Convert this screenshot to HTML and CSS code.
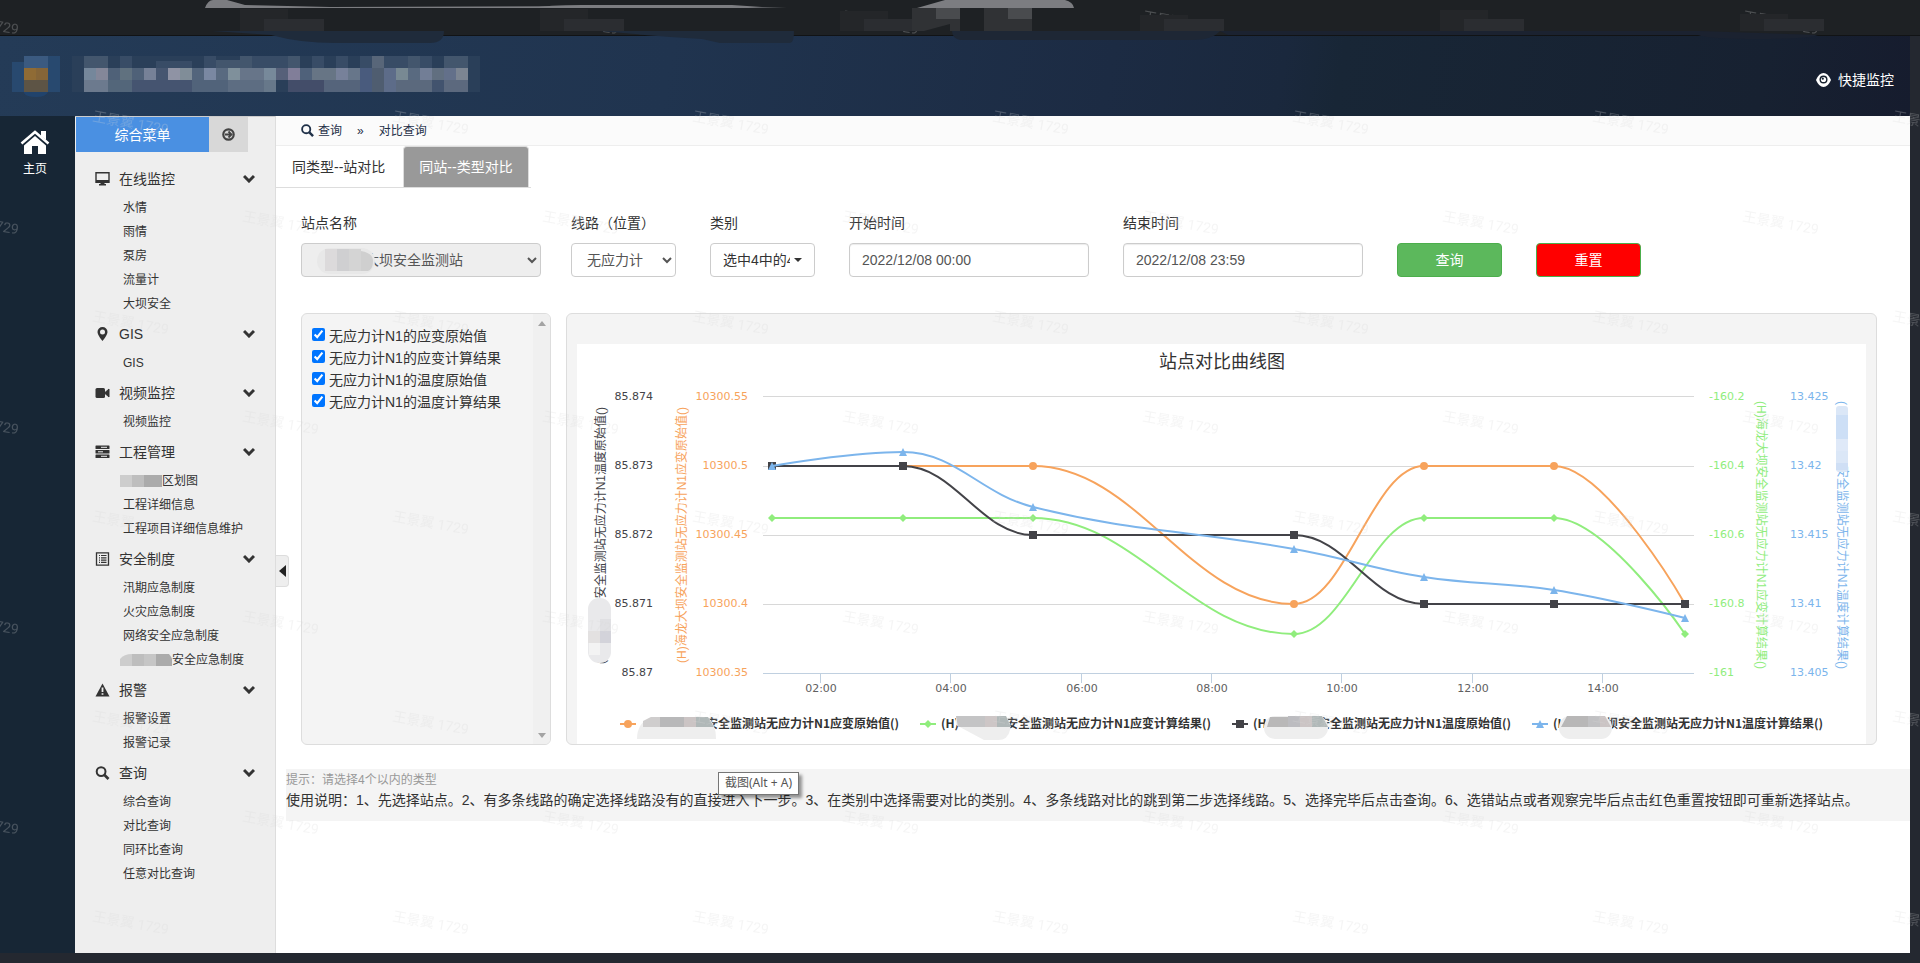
FILE: index.html
```html
<!DOCTYPE html>
<html lang="zh-CN">
<head>
<meta charset="utf-8">
<title>对比查询</title>
<link rel="stylesheet" href="styles.css">
</head>
<body>
<svg class="sprite" aria-hidden="true">
  <symbol id="i-chevron" viewBox="0 0 12 9"><path d="M1 2l5 5 5-5" fill="none" stroke="currentColor" stroke-width="3"/></symbol>
  <symbol id="i-search" viewBox="0 0 14 14"><circle cx="5.6" cy="5.6" r="4.4" fill="none" stroke="currentColor" stroke-width="2"/><path d="M9 9l4 4" stroke="currentColor" stroke-width="2.6"/></symbol>
</svg>

<div class="strip">
  <svg class="strip-art" width="1920" height="48" viewBox="0 0 1920 48" aria-hidden="true">
    <path d="M205 8q3-8 8-8h14l18 5 85 2 300-1 60-1 20 1 77 2z" fill="#7c7d81"/>
    <path d="M532 8q15-3 50-3h150l30 2-100 1z" fill="#7c7d81"/>
    <path d="M917 8l28-8h120q8 2 9 8z" fill="#7c7d81"/>
    <g fill="#242629"><path d="M240 9h48v22h-48zM540 9h48v22h-48zM840 11h48v20h-48zM1140 15h48v16h-48zM1440 10h48v21h-48zM1740 14h48v17h-48z"/></g>
    <g fill="#1e2124"><path d="M288 9h42v10h-42zM588 9h42v10h-42zM888 9h24v10h-24zM1188 16h42v6h-42zM1488 9h42v10h-42zM1788 14h42v8h-42z"/></g>
    <g fill="#2b2d31"><path d="M264 19h60v12h-60zM564 19h60v12h-60zM864 19h48v12h-48zM1164 19h60v12h-60zM1464 19h60v12h-60zM1764 19h60v12h-60z"/></g>
    <path d="M912 8h48v23h-48zM984 8h48v23h-48z" fill="#303235"/>
    <path d="M936 8h24v11h-24zM1008 8h24v11h-24z" fill="#494b4e"/>
    <path d="M924 31l26-7v7z" fill="#1e2124"/>
    <path d="M212 31h232q0 12-14 12h-95q-35 0-64-8z" fill="#1f2b3b"/>
    <path d="M600 31h194q0 12-4 12h-70l-18-4q-50-3-102-8z" fill="#1f2b3b"/>
    <path d="M952 31h268q-8 9-28 9H960q-8-2-8-9z" fill="#1e2735"/>
    <path d="M1220 31h480l118 4q-10 4-60 4t-60-4h-470z" fill="#1b2230"/>
  </svg>
</div>

<div class="frame">
  <header class="head">
    <svg class="brand" width="480" height="48" viewBox="0 0 480 48" role="img" aria-label="平台名称">
      <path d="M12 6h12V1h24v-1h12v36H12z" fill="#28496f"/>
      <path d="M24 0h24v12H24z" fill="#3b5a80"/><path d="M24 12h12v12H24z" fill="#8f6b35"/><path d="M36 12h12v12H36z" fill="#856538"/><path d="M24 24h24v12H24z" fill="#5d5445"/><path d="M24 36h24q-2 5-12 5t-12-4z" fill="#21436c"/>
      <path d="M72 0h408v36H72z" fill="#2a3f59"/>
      <g fill="#43566d"><path d="M84 0h24v12H84zM240 0h12v12h-12zM288 0h12v12h-12zM408 0h12v12h-12zM444 0h24v12h-24zM216 4h24v8h-24z"/></g>
      <g fill="#384c66"><path d="M120 0h12v12h-12zM156 5h36v7h-36zM204 0h12v12h-12zM264 0h24v12h-24zM312 0h12v12h-12zM336 0h12v12h-12zM360 0h12v12h-12zM384 0h24v12h-24zM420 0h12v12h-12zM252 0h12v12h-12z"/></g>
      <path d="M372 0h12v12h-12z" fill="#586679"/>
      <path d="M84 12h12v12H84z" fill="#75879b"/><path d="M96 12h12v12H96z" fill="#848799"/>
      <path d="M108 12h12v12h-12zM132 12h12v12h-12z" fill="#4f6178"/><path d="M120 12h12v12h-12z" fill="#60717f"/>
      <path d="M144 12h12v12h-12z" fill="#768197"/><path d="M156 12h12v12h-12z" fill="#465670"/>
      <path d="M168 12h12v12h-12z" fill="#8f93a4"/><path d="M180 12h12v12h-12z" fill="#808d98"/><path d="M192 12h12v12h-12z" fill="#53657c"/>
      <path d="M204 12h12v12h-12z" fill="#7a88a2"/><path d="M216 12h12v12h-12z" fill="#596a80"/><path d="M228 12h12v12h-12z" fill="#7f909b"/>
      <path d="M240 12h24v12h-24z" fill="#677589"/><path d="M264 12h12v12h-12z" fill="#77899a"/><path d="M276 12h12v12h-12z" fill="#566079"/>
      <path d="M288 12h12v12h-12z" fill="#817e99"/><path d="M300 12h12v12h-12z" fill="#4f617a"/><path d="M312 12h24v12h-24z" fill="#677585"/>
      <path d="M336 12h12v12h-12z" fill="#77819a"/><path d="M348 12h12v12h-12z" fill="#67768a"/><path d="M360 12h12v24h-12z" fill="#495b7d"/>
      <path d="M372 12h12v24h-12z" fill="#4f5d70"/><path d="M384 12h12v24h-12z" fill="#5d6c89"/><path d="M396 12h12v12h-12z" fill="#788993"/>
      <path d="M408 12h12v12h-12z" fill="#596a80"/><path d="M420 12h12v12h-12z" fill="#727e96"/><path d="M432 12h12v12h-12z" fill="#616f80"/>
      <path d="M444 12h12v12h-12z" fill="#63708a"/><path d="M456 12h12v12h-12z" fill="#7c8592"/>
      <path d="M84 24h24v12H84z" fill="#6c7a8e"/><path d="M108 24h24v12h-24z" fill="#53667a"/><path d="M132 24h60v12h-60z" fill="#455470"/>
      <path d="M192 24h36v12h-36z" fill="#51637a"/><path d="M228 24h36v12h-36z" fill="#5d6d82"/><path d="M264 24h12v12h-12z" fill="#67788a"/>
      <path d="M288 24h36v12h-36z" fill="#434d69"/><path d="M324 24h36v12h-36z" fill="#55647b"/><path d="M396 24h36v12h-36z" fill="#5b697d"/>
      <path d="M432 24h12v12h-12z" fill="#42536e"/><path d="M444 24h24v12h-24z" fill="#5c697e"/>
    </svg>
    <a class="quick" href="#">
      <svg width="15" height="14" viewBox="0 0 15 14" aria-hidden="true"><path d="M0 7Q3 0 7.500 0T15 7q-3 7-7.500 7T0 7z" fill="#fff"/><circle cx="7.500" cy="6.500" r="4" fill="#18222f"/><circle cx="7.500" cy="6.500" r="2.600" fill="#fff"/><circle cx="6.800" cy="5.700" r="1.100" fill="#18222f"/></svg>
      快捷监控
    </a>
  </header>

  <div class="body">
    <nav class="rail">
      <a class="rail-link" href="#">
        <svg width="30" height="25" viewBox="0 0 30 25" aria-hidden="true"><path d="M1.500 13.500L15 2l13.500 11.500" fill="none" stroke="#fff" stroke-width="2.600"/><path d="M21 1h5v9l-5-4zM15 6l11 9.500V24h-8v-8h-6v8H4v-8.500z" fill="#fff"/></svg>
        主页
      </a>
    </nav>

    <aside class="side">
      <div class="side-top">
        <button class="side-title" type="button">综合菜单</button>
        <button class="side-pin" type="button" aria-label="切换菜单"><svg width="13" height="13" viewBox="0 0 13 13"><circle cx="6.500" cy="6.500" r="5.200" fill="none" stroke="#444" stroke-width="2.200"/><path d="M3 6.500h6M6.500 3.500l3 3-3 3" fill="none" stroke="#444" stroke-width="1.800"/></svg></button>
      </div>
      <ul class="menu">
        <li>
          <a class="group" href="#"><svg class="gi" viewBox="0 0 15 14"><path d="M1 .8h13v9.400H1z" fill="none" stroke="#333" stroke-width="1.400"/><path d="M1 8h13v2.500H1zM5.500 10h4v2h1.500v1.500H4V12h1.500z" fill="#333"/></svg>在线监控<svg class="chev"><use href="#i-chevron"/></svg></a>
          <a class="item" href="#">水情</a><a class="item" href="#">雨情</a><a class="item" href="#">泵房</a><a class="item" href="#">流量计</a><a class="item" href="#">大坝安全</a>
        </li>
        <li>
          <a class="group" href="#"><svg class="gi" viewBox="0 0 15 14"><path d="M7.500 0a5 5 0 0 1 5 5c0 3-5 9-5 9s-5-6-5-9a5 5 0 0 1 5-5zm0 2.500a2.500 2.500 0 1 0 0 5 2.500 2.500 0 0 0 0-5z" fill="#333"/></svg>GIS<svg class="chev"><use href="#i-chevron"/></svg></a>
          <a class="item" href="#">GIS</a>
        </li>
        <li>
          <a class="group" href="#"><svg class="gi" viewBox="0 0 15 14"><rect x=".5" y="2" width="9.500" height="10" rx="1.500" fill="#333"/><path d="M10 6.500L14 3v8l-4-3.500z" fill="#333" stroke="#333"/></svg>视频监控<svg class="chev"><use href="#i-chevron"/></svg></a>
          <a class="item" href="#">视频监控</a>
        </li>
        <li>
          <a class="group" href="#"><svg class="gi" viewBox="0 0 15 14"><g fill="#333"><rect x=".5" y=".5" width="14" height="3.600" rx=".6"/><rect x=".5" y="5" width="14" height="3.600" rx=".6"/><rect x=".5" y="9.500" width="14" height="3.600" rx=".6"/></g><path d="M6 2.300h6M3 6.800h5M6 11.300h6" stroke="#eee"/></svg>工程管理<svg class="chev"><use href="#i-chevron"/></svg></a>
          <a class="item" href="#"><svg class="mask" width="42" height="12" viewBox="0 0 42 12"><path d="M0 0h12v12H0z" fill="#cdcdcd"/><path d="M12 0h12v12H12z" fill="#bebebe"/><path d="M24 0h18v12H24z" fill="#ababab"/></svg>区划图</a><a class="item" href="#">工程详细信息</a><a class="item" href="#">工程项目详细信息维护</a>
        </li>
        <li>
          <a class="group" href="#"><svg class="gi" viewBox="0 0 15 14"><path d="M1.500.8h12v12.400h-12z" fill="none" stroke="#333" stroke-width="1.300"/><path d="M4 3.500h1M4 5.800h1M4 8.100h1M4 10.400h1M6 3.500h5.500M6 5.800h5.500M6 8.100h5.500M6 10.400h5.500" stroke="#333" stroke-width="1.200"/></svg>安全制度<svg class="chev"><use href="#i-chevron"/></svg></a>
          <a class="item" href="#">汛期应急制度</a><a class="item" href="#">火灾应急制度</a><a class="item" href="#">网络安全应急制度</a>
          <a class="item" href="#"><svg class="mask" width="52" height="12" viewBox="0 0 52 12"><path d="M0 12V5q4-5 12-5v12z" fill="#cdcdcd"/><path d="M12 0h12v12H12z" fill="#bebebe"/><path d="M24 0h12v12H24z" fill="#c6c6c6"/><path d="M36 0h13q5 6 5 12H36z" fill="#ababab"/></svg>安全应急制度</a>
        </li>
        <li>
          <a class="group" href="#"><svg class="gi" viewBox="0 0 15 14"><path d="M7.500.5L14.500 13.500H.5z" fill="#333"/><path d="M7.500 4.500v4.500M7.500 10.300v1.500" stroke="#eee" stroke-width="1.800"/></svg>报警<svg class="chev"><use href="#i-chevron"/></svg></a>
          <a class="item" href="#">报警设置</a><a class="item" href="#">报警记录</a>
        </li>
        <li>
          <a class="group" href="#"><svg class="gi"><use href="#i-search"/></svg>查询<svg class="chev"><use href="#i-chevron"/></svg></a>
          <a class="item" href="#">综合查询</a><a class="item" href="#">对比查询</a><a class="item" href="#">同环比查询</a><a class="item" href="#">任意对比查询</a>
        </li>
      </ul>
    </aside>

    <main class="main">
      <button class="fold" type="button" aria-label="收起菜单"><svg width="7" height="12" viewBox="0 0 7 12"><path d="M7 0v12L0 6z" fill="#222"/></svg></button>
      <div class="crumb">
        <svg width="13" height="13"><use href="#i-search"/></svg><a href="#">查询</a><span class="sep">»</span><a href="#">对比查询</a>
      </div>
      <div class="tabs">
        <a class="tab" href="#">同类型--站对比</a>
        <a class="tab on" href="#">同站--类型对比</a>
      </div>

      <form class="filters">
        <div class="pair">
          <div class="field wide">
            <label for="station">站点名称</label>
            <select id="station" disabled><option>大坝安全监测站</option></select>
            <svg class="station-mask" width="58" height="26" viewBox="0 0 58 26" aria-hidden="true"><rect width="58" height="26" rx="13" fill="#e8e8e8"/><path d="M8 1h12v22H8z" fill="#dcdadb"/><path d="M20 1h12v22H20z" fill="#cfcfd1"/><path d="M32 1h12v22H32z" fill="#d4d4d4"/><path d="M44 3q12 2 12 10t-5 10h-7z" fill="#cfcfcf"/></svg>
          </div>
          <div class="field">
            <label for="line">线路（位置）</label>
            <select id="line"><option>无应力计</option></select>
          </div>
        </div>
        <div class="field">
          <label for="kind">类别</label>
          <button id="kind" class="drop" type="button"><span>选中4中的4个</span><i class="caret"></i></button>
        </div>
        <div class="field wide">
          <label for="from">开始时间</label>
          <input id="from" type="text" value="2022/12/08 00:00">
        </div>
        <div class="field wide">
          <label for="to">结束时间</label>
          <input id="to" type="text" value="2022/12/08 23:59">
        </div>
        <button class="btn" type="submit">查询</button>
        <button class="btn red" type="reset">重置</button>
      </form>

      <div class="panels">
        <div class="picks">
          <div class="checks">
            <label><input type="checkbox" checked>无应力计N1的应变原始值</label>
            <label><input type="checkbox" checked>无应力计N1的应变计算结果</label>
            <label><input type="checkbox" checked>无应力计N1的温度原始值</label>
            <label><input type="checkbox" checked>无应力计N1的温度计算结果</label>
          </div>
          <div class="bar"><svg width="8" height="5"><path d="M0 5l4-5 4 5z" fill="#a3a3a3"/></svg><svg width="8" height="5"><path d="M0 0l4 5 4-5z" fill="#a3a3a3"/></svg></div>
        </div>

        <div class="chart">
          <svg class="plot" viewBox="0 0 1289 400" role="img" aria-label="站点对比曲线图">
            <rect width="1289" height="400" fill="#fff"/>
            <text class="title" x="645" y="24">站点对比曲线图</text>
            <path d="M186 52.500h931M186 122.500h931M186 191.500h931M186 260.500h931" stroke="#d8d8d8"/>
            <path d="M186 329.500h931M243.500 329v10M373.500 329v10M504.500 329v10M634.500 329v10M764.500 329v10M895.500 329v10M1025.500 329v10" stroke="#c0d0e0"/>
            <g class="tick end dark"><text x="76" y="56">85.874</text><text x="76" y="125">85.873</text><text x="76" y="194">85.872</text><text x="76" y="263">85.871</text><text x="76" y="332">85.87</text></g>
            <g class="tick end orange"><text x="171" y="56">10300.55</text><text x="171" y="125">10300.5</text><text x="171" y="194">10300.45</text><text x="171" y="263">10300.4</text><text x="171" y="332">10300.35</text></g>
            <g class="tick green"><text x="1132" y="56">-160.2</text><text x="1132" y="125">-160.4</text><text x="1132" y="194">-160.6</text><text x="1132" y="263">-160.8</text><text x="1132" y="332">-161</text></g>
            <g class="tick blue"><text x="1213" y="56">13.425</text><text x="1213" y="125">13.42</text><text x="1213" y="194">13.415</text><text x="1213" y="263">13.41</text><text x="1213" y="332">13.405</text></g>
            <g class="tick mid grey"><text x="244" y="348">02:00</text><text x="374" y="348">04:00</text><text x="505" y="348">06:00</text><text x="635" y="348">08:00</text><text x="765" y="348">10:00</text><text x="896" y="348">12:00</text><text x="1026" y="348">14:00</text></g>

            <g class="axis">
              <text class="dark end" transform="translate(28 63) rotate(-90)">安全监测站无应力计N1温度原始值()</text>
              <text class="dark" transform="translate(28 320) rotate(-90)">(</text>
              <text class="orange mid" transform="translate(109 191) rotate(-90)">(H)海龙大坝安全监测站无应力计N1应变原始值()</text>
              <text class="green mid" transform="translate(1180 191) rotate(90)">(H)海龙大坝安全监测站无应力计N1应变计算结果()</text>
              <text class="blue" transform="translate(1261 57) rotate(90)">(</text>
              <text class="blue end" transform="translate(1261 325) rotate(90)">安全监测站无应力计N1温度计算结果()</text>
            </g>
            <rect x="11" y="254" width="23" height="65" rx="11" fill="#e9e9eb"/><path d="M23 275h11v12H23z" fill="#e0e0e3"/><path d="M23 287h11v12H23z" fill="#d3d3da"/><path d="M11 287h12v12H11z" fill="#e3e1e1"/><path d="M12 299h11v12H12z" fill="#f3f3f3"/>
            <rect x="1259" y="62" width="12" height="66" rx="3" fill="#dbe7f7"/><path d="M1259 71h12v24h-12z" fill="#cddff6"/><path d="M1259 95h12v12h-12z" fill="#dfe9f8"/><path d="M1259 119h12v7h-12z" fill="#cfdff5"/>

            <g fill="none" stroke-width="2">
              <path stroke="#f7a35c" d="M195 122H456C560 122 613 260 717 260C769 260 795 122 847 122H977C1029 122 1108 260 1108 260"/>
              <path stroke="#90ed7d" d="M195 174H456C560 174 613 290 717 290C769 290 795 174 847 174H977C1029 174 1108 290 1108 290"/>
              <path stroke="#434348" d="M195 122H326C378 122 404 191 456 191H717C769 191 795 260 847 260H1108"/>
            </g>
            <g fill="#f7a35c"><circle cx="456" cy="122" r="4"/><circle cx="717" cy="260" r="4"/><circle cx="847" cy="122" r="4"/><circle cx="977" cy="122" r="4"/></g>
            <path fill="#90ed7d" d="M195 170l4 4-4 4-4-4zM326 170l4 4-4 4-4-4zM456 170l4 4-4 4-4-4zM717 286l4 4-4 4-4-4zM847 170l4 4-4 4-4-4zM977 170l4 4-4 4-4-4zM1108 286l4 4-4 4-4-4z"/>
            <path fill="#434348" d="M191 118h8v8h-8zM322 118h8v8h-8zM452 187h8v8h-8zM713 187h8v8h-8zM843 256h8v8h-8zM973 256h8v8h-8zM1104 256h8v8h-8z"/>
            <path fill="none" stroke="#7cb5ec" stroke-width="2" d="M195 122C195 122 274 108 326 108C378 108 404 150 456 163C560 189 613 186 717 205C769 214 795 225 847 233C899 241 925 238 977 246C1029 254 1108 274 1108 274"/>
            <path fill="#7cb5ec" d="M195 118l4 8h-8zM326 104l4 8h-8zM456 159l4 8h-8zM717 201l4 8h-8zM847 229l4 8h-8zM977 242l4 8h-8zM1108 270l4 8h-8z"/>

            <g stroke-width="2"><path d="M43 380h16" stroke="#f7a35c"/><path d="M343 380h16" stroke="#90ed7d"/><path d="M655 380h16" stroke="#434348"/><path d="M955 380h16" stroke="#7cb5ec"/></g>
            <circle cx="51" cy="380" r="4" fill="#f7a35c"/><path d="M351 376l4 4-4 4-4-4z" fill="#90ed7d"/><path d="M659 376h8v8h-8z" fill="#434348"/><path d="M963 376l4 8h-8z" fill="#7cb5ec"/>
            <g class="legend">
              <text x="129" y="384">安全监测站无应力计N1应变原始值()</text>
              <text x="364" y="384">(H)</text><text x="429" y="384">安全监测站无应力计N1应变计算结果()</text>
              <text x="676" y="384">(H</text><text x="741" y="384">安全监测站无应力计N1温度原始值()</text>
              <text x="976" y="384">(H</text><text x="1029" y="384">坝安全监测站无应力计N1温度计算结果()</text>
            </g>
            <g><path d="M60 395q0-16 14-22h56q9 6 9 22z" fill="#eee"/><path d="M66 383v-6l8-4h9v10z" fill="#cfcdcd"/><path d="M83 373h24v10H83z" fill="#b8b8b9"/><path d="M107 373h12v10h-12z" fill="#cbc4c4"/><path d="M119 373h12l6 10h-18z" fill="#b0b8b8"/></g>
            <g><path d="M379 372h50q6 8 4 14-2 10-12 10h-14l-28-15z" fill="#eee"/><path d="M379 372h29v11h-27z" fill="#c4c4c5"/><path d="M408 372h12v11h-12z" fill="#cdc6c6"/><path d="M420 372h9l5 11h-14z" fill="#b0b8b8"/></g>
            <g><rect x="687" y="372" width="64" height="23" rx="11" fill="#eee"/><path d="M693 373h18v10h-21z" fill="#b9b8b8"/><path d="M711 372h12v11h-12z" fill="#bcbcc0"/><path d="M723 372h12v11h-12z" fill="#cbc4c4"/><path d="M735 372h10l6 11h-16z" fill="#b0b8b8"/></g>
            <g><rect x="982" y="372" width="53" height="23" rx="11" fill="#eee"/><path d="M990 372h21v11h-27z" fill="#b8b7b7"/><path d="M1011 372h12v11h-12z" fill="#c0c0c2"/><path d="M1023 372h5l6 11h-11z" fill="#cbc4c4"/></g>
          </svg>
        </div>
      </div>

      <div class="notes">
        <p class="hint">提示：请选择4个以内的类型</p>
        <p>使用说明：1、先选择站点。2、有多条线路的确定选择线路没有的直接进入下一步。3、在类别中选择需要对比的类别。4、多条线路对比的跳到第二步选择线路。5、选择完毕后点击查询。6、选错站点或者观察完毕后点击红色重置按钮即可重新选择站点。</p>
        <span class="tip" role="tooltip">截图(Alt + A)</span>
      </div>
    </main>
  </div>
</div>

<svg class="watermark" aria-hidden="true">
  <defs>
    <pattern id="wm" x="83" y="98" width="300" height="200" patternUnits="userSpaceOnUse">
      <text transform="translate(9 23) rotate(10)">王景翼 1729</text>
      <text transform="translate(159 123) rotate(10)">王景翼 1729</text>
    </pattern>
  </defs>
  <rect width="100%" height="100%" fill="url(#wm)"/>
</svg>
</body>
</html>
```
FILE: styles.css
```css
* { box-sizing: border-box; }
body {
  margin: 0;
  min-height: 100vh;
  display: flex;
  flex-direction: column;
  background: #242830;
  color: #333;
  font: 14px/20px "Liberation Sans", "Noto Sans CJK SC", sans-serif;
}
a { color: inherit; text-decoration: none; }
button, input, select { font: inherit; color: inherit; margin: 0; }
svg { flex: none; }
.sprite { position: absolute; width: 0; height: 0; }

.strip { height: 36px; background: #1e2124; border-bottom: 1px solid #111315; }
.strip-art { display: block; position: relative; z-index: 6; max-width: 100%; }

.frame { flex: 1; display: flex; flex-direction: column; padding: 0 10px 10px 0; }
.head {
  height: 80px;
  display: flex;
  align-items: center;
  justify-content: space-between;
  padding: 8px 16px 0 0;
  background: linear-gradient(100deg, #243b57 0%, #20344f 35%, #1c2b43 58%, #1a283d 67%, #182636 70%, #172131 92%, #161c2e 100%);
}
.quick { display: flex; align-items: center; gap: 7px; color: #fff; }

.body { flex: 1; display: flex; }
.rail { width: 75px; flex: none; background: #172635; padding: 14px 5px 0 0; }
.rail-link { display: flex; flex-direction: column; align-items: center; gap: 4px; color: #fff; font-size: 12px; }

.side { width: 201px; flex: none; background: #eee; border-right: 1px solid #ddd; border-top: 1px solid #ccc; }
.side-top { display: flex; height: 35px; padding-left: 1px; }
.side-title { width: 133px; border: 0; background: #4a90e2; color: #fff; }
.side-pin { width: 39px; border: 0; padding: 0; background: #d8d8d8; display: flex; align-items: center; justify-content: center; }
.menu { list-style: none; margin: 9px 0 0; padding: 0; }
.group { display: flex; align-items: center; height: 35px; padding: 0 20px 0 20px; }
.gi { width: 15px; height: 14px; margin-right: 9px; }
.chev { width: 12px; height: 9px; margin-left: auto; }
.item { display: flex; align-items: center; height: 24px; padding-left: 48px; font-size: 12px; }
.mask { margin-left: -3px; }

.main { flex: 1; min-width: 0; background: #fff; position: relative; }
.fold {
  position: absolute; left: 0; top: 439px; width: 13px; height: 32px; padding: 0 0 0 3px;
  display: flex; align-items: center;
  background: #eee; border: 1px solid #ddd; border-left: 0; border-radius: 0 4px 4px 0;
}
.crumb { display: flex; align-items: center; height: 30px; padding-left: 25px; background: #fbfbfb; border-bottom: 1px solid #eee; color: #1f3048; font-size: 12px; }
.crumb a { margin-left: 4px; }
.crumb .sep { margin: 0 11px 0 15px; }
.tabs { display: inline-flex; gap: 2px; padding-right: 2px; border-bottom: 1px solid #ddd; vertical-align: top; }
.tab { padding: 10px 15px; border: 1px solid transparent; border-bottom: 0; border-radius: 4px 4px 0 0; }
.tab.on { background: #999; border-color: #ddd; color: #fff; }

.filters { display: flex; align-items: flex-end; gap: 34px; padding: 25px 25px 0; }
.pair { display: flex; gap: 30px; }
.field { display: flex; flex-direction: column; gap: 10px; width: 105px; position: relative; }
.field.wide { width: 240px; }
.field select, .field input, .drop {
  width: 100%; height: 34px; padding: 6px 12px; background: #fff;
  border: 1px solid #ccc; border-radius: 4px; color: #555;
}
.field input { box-shadow: inset 0 1px 1px rgba(0, 0, 0, .08); }
.field select:disabled { background: #eee; padding-left: 59px; padding-right: 5px; opacity: 1; }
.field #line { padding-left: 11px; padding-right: 5px; }
.station-mask { position: absolute; left: 16px; bottom: 3px; }
.drop { display: flex; align-items: center; justify-content: space-between; color: #333; }
.drop span { width: 67px; overflow: hidden; white-space: nowrap; text-align: left; flex: none; }
.caret { border: 4px solid transparent; border-top-color: #333; border-bottom: 0; }
.btn { width: 105px; height: 34px; border: 1px solid #4cae4c; border-radius: 4px; background: #5cb85c; color: #fff; }
.btn.red { background: #f00; }

.panels { display: flex; gap: 15px; padding: 36px 33px 0 25px; }
.picks, .chart { background: #f4f4f4; border: 1px solid #ddd; border-radius: 6px; }
.picks { width: 250px; flex: none; display: flex; justify-content: space-between; overflow: hidden; }
.checks { padding: 11px 10px; }
.checks label { display: flex; align-items: center; gap: 4px; height: 22px; }
.checks input { width: 13px; height: 13px; margin: 0 0 4px; }
.bar { width: 17px; background: #f0f0f0; display: flex; flex-direction: column; justify-content: space-between; align-items: center; padding: 7px 0 6px; }
.chart { flex: 1; min-width: 0; padding: 30px 10px 0; }
.plot { display: block; width: 100%; height: auto; }
.plot text { fill: #333; }
.plot .title { font-size: 18px; text-anchor: middle; }
.plot .tick { font: 11px "DejaVu Sans", sans-serif; }
.plot .axis { font-size: 12px; }
.plot .legend { font: bold 12px "Noto Sans CJK SC", sans-serif; }
.plot .end { text-anchor: end; }
.plot .mid { text-anchor: middle; }
.plot .dark, .plot .dark text { fill: #434348; }
.plot .orange, .plot .orange text { fill: #f7a35c; }
.plot .green, .plot .green text { fill: #90ed7d; }
.plot .blue, .plot .blue text { fill: #7cb5ec; }
.plot .grey text { fill: #606060; }

.notes { position: relative; margin: 24px 0 0 10px; height: 52px; padding-top: 1px; background: #f4f4f4; white-space: nowrap; }
.notes p { margin: 0; }
.hint { color: #999; font-size: 12px; }
.tip {
  position: absolute; left: 432px; top: 3px; padding: 0 6px; height: 23px;
  background: #fff; border: 1px solid #767676; box-shadow: 3px 3px 3px rgba(0, 0, 0, .4);
  color: #555; font: 12px/20px "Noto Sans", "Noto Sans CJK SC", sans-serif;
}

.watermark { position: fixed; inset: 0; width: 100%; height: 100%; z-index: 5; pointer-events: none; }
.watermark text { font: 14px Roboto, "Noto Sans CJK SC", sans-serif; fill: rgba(215, 215, 215, .25); }
```
